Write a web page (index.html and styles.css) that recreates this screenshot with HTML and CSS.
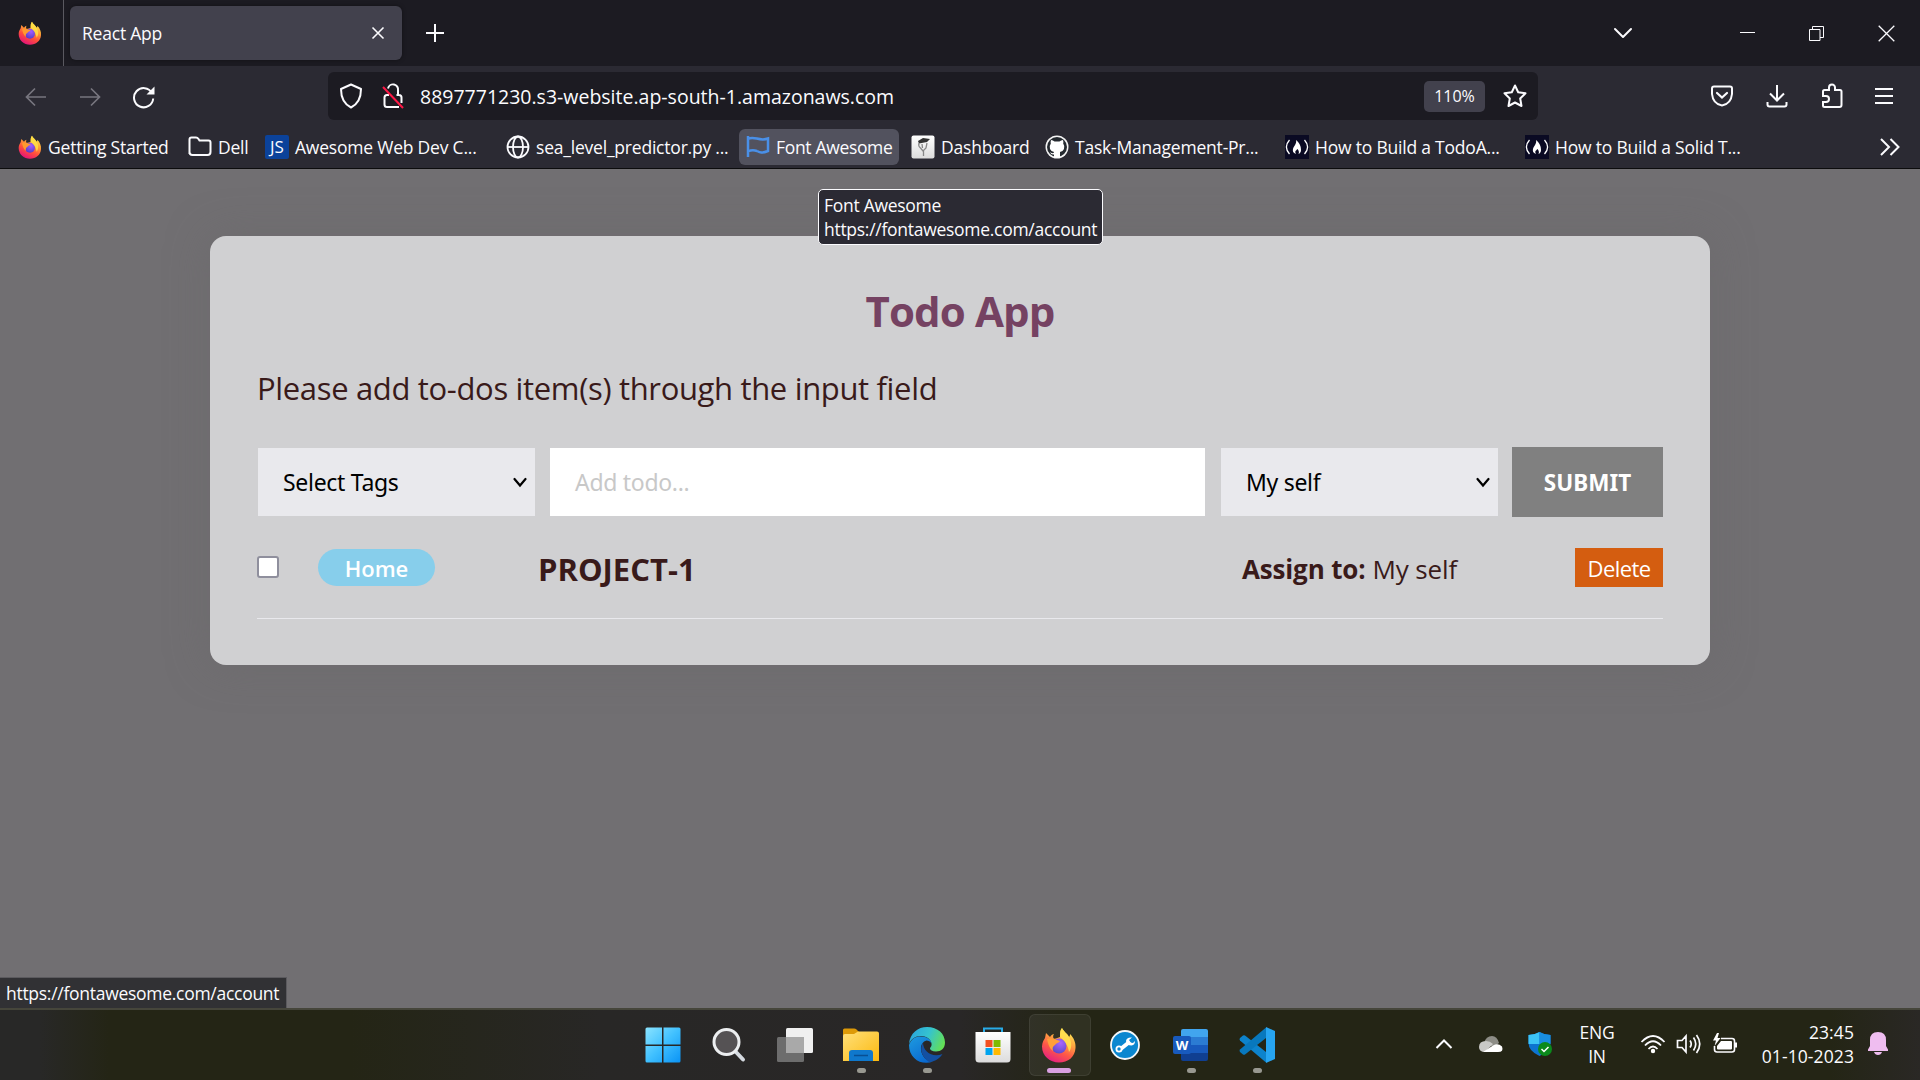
FILE: index.html
```html
<!DOCTYPE html>
<html lang="en">
<head>
<meta charset="utf-8">
<title>React App</title>
<link rel="stylesheet" href="styles.css">
</head>
<body>
<svg class="defs" width="0" height="0">
  <defs>
    <linearGradient id="fxBody" x1="0.8" y1="0" x2="0.3" y2="1"><stop offset="0" stop-color="#fff44f"/><stop offset=".35" stop-color="#ffa436"/><stop offset=".65" stop-color="#ff4f3b"/><stop offset="1" stop-color="#e2107c"/></linearGradient>
    <radialGradient id="fxGlobe" cx=".6" cy=".3" r=".8"><stop offset="0" stop-color="#a45cff"/><stop offset="1" stop-color="#4b3bc0"/></radialGradient>
    <linearGradient id="win" x1="0" y1="0" x2="1" y2="1"><stop offset="0" stop-color="#8be4ff"/><stop offset=".5" stop-color="#40c0ff"/><stop offset="1" stop-color="#0a93f5"/></linearGradient>
    <linearGradient id="folder" x1="0" y1="0" x2="1" y2="1"><stop offset="0" stop-color="#ffe07a"/><stop offset="1" stop-color="#fcb90f"/></linearGradient>
    <linearGradient id="edgeTop" x1="0" y1=".3" x2="1" y2=".6"><stop offset="0" stop-color="#2aa5dd"/><stop offset=".5" stop-color="#35c3cf"/><stop offset="1" stop-color="#65e053"/></linearGradient>
    <linearGradient id="edgeLow" x1="0" y1="0" x2=".6" y2="1"><stop offset="0" stop-color="#1e9be0"/><stop offset="1" stop-color="#0a6ad0"/></linearGradient>
    <linearGradient id="paper" x1="0" y1="0" x2="0" y2="1"><stop offset="0" stop-color="#ffffff"/><stop offset="1" stop-color="#dcdcdc"/></linearGradient>
    <symbol id="firefox" viewBox="0 0 36 36">
      <path d="M21 1c1 3 5 5 7 9 1-1 1-2 1-3 4 4 6 9 5.500 14C34 30 27 35.500 18 35.500S1 29 1 19.500c0-4 2-7 3-8.500L5 6l4 4c1-2 3-3 4-3-1 1-1 3-.5 4.500C14 12 17 11 19 10c0-4 0-7 2-9z" fill="url(#fxBody)"/>
      <circle cx="18" cy="19" r="7.500" fill="url(#fxGlobe)"/>
      <path d="M6 12c5-2 9 1 13 2-1 2-4 2-5 4-2 1-3 3-2 6-4-3-5-8-6-12z" fill="#ff9a2e"/>
      <path d="M21 1c1 3 5 5 7 9 3 5 3 11 0 15-1-6-3-10-9-15 0-4 0-7 2-9z" fill="#ffe045" opacity=".85"/>
    </symbol>
    <symbol id="fcc" viewBox="0 0 24 24">
      <rect width="24" height="24" fill="#0a0a23"/>
      <path d="M4.500 5C.5 9.500.5 14.500 4.500 19M19.500 5C23.500 9.500 23.500 14.500 19.500 19" fill="none" stroke="#fff" stroke-width="1.300"/>
      <path d="M11 5c4 3 5 7 5 10 0 2-1 3.500-2.500 4 1-2 0-4-1-5-1 1-1 1-2 2-.5 1 0 2 .5 3C8 18 7.500 16 8 14c.5-3 4-5 3-9z" fill="#fff"/>
    </symbol>
  </defs>
</svg>

<div class="screen">
  <header class="tabstrip">
    <div class="fx-home"><svg width="24" height="24"><use href="#firefox"/></svg></div>
    <div class="tab"><span class="ui-text">React App</span>
      <svg width="14" height="14" viewBox="0 0 14 14" class="line"><path d="M1.500 1.500l11 11M12.500 1.500l-11 11"/></svg></div>
    <svg class="line new-tab" width="20" height="20" viewBox="0 0 20 20"><path d="M10 1v18M1 10h18" stroke-width="2"/></svg>
    <div class="win-controls">
      <svg class="line" width="20" height="12" viewBox="0 0 20 12"><path d="M2 2l8 8 8-8" stroke-width="2" stroke-linecap="round" stroke-linejoin="round"/></svg>
      <svg class="line" width="15" height="14" viewBox="0 0 15 14"><path d="M0 6.500h15" stroke-width="1"/></svg>
      <svg class="line" width="15" height="15" viewBox="0 0 15 15"><path d="M.5 3.500h10.500v11H.5zM3.500 3.500V.5h11V11.500h-3.500" stroke-width="1"/></svg>
      <svg class="line" width="17" height="17" viewBox="0 0 17 17"><path d="M.7.7l15.600 15.600M16.300.7L.7 16.300" stroke-width="1.300"/></svg>
    </div>
  </header>

  <nav class="navbar">
    <div class="nav-buttons">
      <svg class="line dim" width="22" height="20" viewBox="0 0 22 20"><path d="M21 10H1.500M10 1.500L1.500 10l8.500 8.500" stroke-width="1.700"/></svg>
      <svg class="line dim" width="22" height="20" viewBox="0 0 22 20"><path d="M1 10h19.500M12 1.500l8.500 8.500-8.500 8.500" stroke-width="1.700"/></svg>
      <svg class="line" width="24" height="24" viewBox="0 0 24 24"><path d="M20 8A9.600 9.600 0 1 0 21.200 13.500" stroke-width="2"/><path d="M22.500 1.500v8h-8z" fill="#fbfbfe" stroke="none"/></svg>
    </div>
    <div class="urlbar">
      <svg class="line" width="24" height="26" viewBox="0 0 24 26"><path d="M12 1.500L22 6c0 9-3 15-10 18.500C5 21 2 15 2 6z" stroke-width="2" stroke-linejoin="round"/></svg>
      <svg class="line lock" width="22" height="26" viewBox="0 0 22 26"><path d="M6 5.500a5 5 0 0 1 10 2V12M14.500 12H17q2.500 0 2.500 2.500V20M17 24H5q-2.500 0-2.500-2.500v-7Q2.500 12 5 12h2" stroke-width="2"/><path d="M1 4l20 21" stroke="#ff1846" stroke-width="2"/></svg>
      <span class="url">8897771230.s3-website.ap-south-1.amazonaws.com</span>
      <div class="zoom-level">110%</div>
      <svg class="line" width="26" height="26" viewBox="0 0 26 26"><path d="M13 2.500l3.200 6.800 7.300 1-5.300 5.200 1.300 7.500L13 19.500 6.500 23l1.300-7.500L2.500 10.300l7.300-1z" stroke-width="2" stroke-linejoin="round"/></svg>
    </div>
    <div class="nav-tools">
      <svg class="line" width="24" height="22" viewBox="0 0 24 22"><path d="M4 1.500h16q2 0 2 2V9q-1 10-10 11.500Q3 19 2 9V3.500q0-2 2-2z" stroke-width="2"/><path d="M7 8l5 4.500L17 8" stroke-width="2.200" stroke-linecap="round"/></svg>
      <svg class="line" width="22" height="24" viewBox="0 0 22 24"><path d="M11 1v15M4 9.500l7 7 7-7M1.500 18v2.500q0 2 2 2h15q2 0 2-2V18" stroke-width="2"/></svg>
      <svg class="line" width="22" height="26" viewBox="0 0 22 26"><path d="M2 13V8.500q0-1.500 1.500-1.500H8V4.500a3 3 0 0 1 6 0V7h5q1.500 0 1.500 1.500V22q0 2-2 2H3.500Q2 24 2 22.500V19h3a3 3 0 0 0 0-6z" stroke-width="2"/></svg>
      <svg class="line" width="18" height="18" viewBox="0 0 18 18"><path d="M0 2h18M0 9h18M0 16h18" stroke-width="2"/></svg>
    </div>
  </nav>

  <div class="bookmarks">
    <div class="bm"><svg width="24" height="24"><use href="#firefox"/></svg><span class="ui-text">Getting Started</span></div>
    <div class="bm"><svg class="line" width="24" height="24" viewBox="0 0 24 24"><path d="M1.500 19V4.500q0-2 2-2H8q1.500 0 2.500 1.500l1 1.500h9q2 0 2 2V17q0 3-3 3h-15q-3 0-3-3z" stroke-width="2"/></svg><span class="ui-text">Dell</span></div>
    <div class="bm"><span class="js-icon">JS</span><span class="ui-text">Awesome Web Dev C...</span></div>
    <div class="bm"><svg class="line" width="24" height="24" viewBox="0 0 24 24"><circle cx="12" cy="12" r="10.500" stroke-width="1.800"/><ellipse cx="12" cy="12" rx="5" ry="10.500" stroke-width="1.800"/><path d="M1.500 12h21" stroke-width="1.800"/></svg><span class="ui-text">sea_level_predictor.py ...</span></div>
    <div class="bm hover"><svg width="24" height="24" viewBox="0 0 24 24"><path d="M2 1v21M2 4c6-4 11 3 20-.5v12.500c-6 2.500-8 1.500-11 0M2 16.500c4-2 6-1.500 9-.5" fill="none" stroke="#4a90e8" stroke-width="2.500"/></svg><span class="ui-text">Font Awesome</span></div>
    <div class="bm"><svg width="24" height="24" viewBox="0 0 24 24"><rect x=".5" y=".5" width="23" height="23" rx="2" fill="url(#paper)"/><path d="M7 6l5-3 7 1-3 3-8 1.500z" fill="#333"/><path d="M8 8q-1 3 1.500 5l2.500 3 3-3 1-5M12.500 15v6M11 9l.5 4" stroke="#888" stroke-width="1.300" fill="none"/></svg><span class="ui-text">Dashboard</span></div>
    <div class="bm"><svg width="24" height="24" viewBox="0 0 24 24"><circle cx="12" cy="12" r="11.500" fill="#f4f4f4"/><circle cx="12" cy="12" r="10" fill="#24292f"/><path d="M6 5q2 0 3.500 1.500h5Q16 5 18 5q.7 2 .2 3.500Q20 11 19 14q-1 2.500-4 3v5.500H9v-3q-3 .5-4-2.500 2 2 4 .5v-.5q-3-.5-4-3-1-3 .8-5.500Q5.300 7 6 5z" fill="#fff"/></svg><span class="ui-text">Task-Management-Pr...</span></div>
    <div class="bm"><svg width="24" height="24"><use href="#fcc"/></svg><span class="ui-text">How to Build a TodoA...</span></div>
    <div class="bm"><svg width="24" height="24"><use href="#fcc"/></svg><span class="ui-text">How to Build a Solid T...</span></div>
    <svg class="line more" width="20" height="18" viewBox="0 0 20 18"><path d="M1 1l8 8-8 8M10.500 1l8 8-8 8" stroke-width="2"/></svg>
  </div>

  <main class="page">
    <section class="card">
      <h1>Todo App</h1>
      <p>Please add to-dos item(s) through the input field</p>
      <form class="todo-form">
        <div class="select"><span>Select Tags</span><svg width="14" height="11" viewBox="0 0 14 11"><path d="M1.500 2L7 8.500 12.500 2" fill="none" stroke="#000" stroke-width="2.200" stroke-linecap="round"/></svg></div>
        <div class="input">Add todo...</div>
        <div class="select"><span>My self</span><svg width="14" height="11" viewBox="0 0 14 11"><path d="M1.500 2L7 8.500 12.500 2" fill="none" stroke="#000" stroke-width="2.200" stroke-linecap="round"/></svg></div>
        <div class="submit">SUBMIT</div>
      </form>
      <div class="todo">
        <span class="checkbox"></span>
        <span class="pill">Home</span>
        <span class="name">PROJECT-1</span>
        <span class="assign"><b>Assign to:</b><span>My self</span></span>
        <span class="delete">Delete</span>
      </div>
    </section>
    <div class="tooltip"><span class="ui-text">Font Awesome</span><span class="ui-text">https://fontawesome.com/account</span></div>
    <div class="status"><span class="ui-text">https://fontawesome.com/account</span></div>
  </main>

  <footer class="taskbar">
    <div class="apps">
      <div class="app"><svg width="36" height="36" viewBox="0 0 36 36"><path d="M2 .5h15v17H.5V2Q.5.5 2 .5zM18.500.5H34q1.500 0 1.500 1.500v15.500h-17zM.5 19H17v16.500H2Q.5 35.500.5 34zM18.500 19h17v15q0 1.500-1.500 1.500H18.500z" fill="url(#win)"/></svg></div>
      <div class="app"><svg width="36" height="36" viewBox="0 0 36 36"><path d="M24 24l8 8.500" stroke="#d5dae0" stroke-width="4" stroke-linecap="round"/><circle cx="15.500" cy="15" r="12.500" fill="#555254" stroke="#eceef0" stroke-width="3"/></svg></div>
      <div class="app"><svg width="36" height="36" viewBox="0 0 36 36"><rect x="9" y="1" width="27" height="25" rx="1.500" fill="#f0f0f0"/><rect x="0" y="10" width="27" height="25" rx="1.500" fill="#6d6d6d"/><path d="M9 10h18v16H9z" fill="#a9a9a9"/></svg></div>
      <div class="app run"><svg width="36" height="36" viewBox="0 0 36 36"><path d="M0 10V3q0-1.500 1.500-1.500H11q1.500 0 2.500 1L16 5v5z" fill="#dd9a08"/><path d="M0 9q0-2 2-2h9l4-2.500h19q2 0 2 2V34H0z" fill="url(#folder)"/><path d="M6 34V26q0-3 3-3h18q3 0 3 3v8z" fill="#0f78cc"/><path d="M11 28.500h14" stroke="#084f93" stroke-width="1.500"/></svg></div>
      <div class="app run"><svg width="36" height="36" viewBox="0 0 36 36"><path d="M0 17C1 6 9 0 18 0c11 0 18 7 18 15.500 0 6-4 9-9 9-4 0-6-1.500-6-3 0-1 2-2 1.500-5C22 12 17 9 12 9 6 9 2 12 0 17z" fill="url(#edgeTop)"/><path d="M0 18C2 12 6 9.500 12 9.500c6 0 10 3 10.500 7-1-2-3-3-5-3-4 1-6 5-5.500 9 .5 7 6 12 12 12C13 39 0 32 0 18z" fill="url(#edgeLow)"/><path d="M14 16c-4 6-1 14 6 19 6 0 11-4 13.500-8-10 4-19-2-19.500-11z" fill="#1350a2"/></svg></div>
      <div class="app"><svg width="36" height="36" viewBox="0 0 36 36"><path d="M9 6V1.500h18V6" fill="none" stroke="#28abe8" stroke-width="2"/><path d="M.5 5h35v27q0 3.500-3.500 3.500H4Q.5 35.500.5 32z" fill="url(#paper)"/><path d="M10.500 13h7v7h-7z" fill="#f25022"/><path d="M18.500 13h7v7h-7z" fill="#7fba00"/><path d="M10.500 21h7v7h-7z" fill="#00a4ef"/><path d="M18.500 21h7v7h-7z" fill="#ffb900"/></svg></div>
      <div class="app active"><svg width="36" height="36"><use href="#firefox"/></svg></div>
      <div class="app"><svg width="36" height="36" viewBox="0 0 36 36"><circle cx="18" cy="18" r="14" fill="#0a87d0" stroke="#f5f8fa" stroke-width="1.800"/><path d="M13 22.500l10-8" stroke="#fff" stroke-width="4"/><circle cx="12" cy="22" r="2.600" fill="#0a87d0" stroke="#fff" stroke-width="1.800"/><path d="M25 10.500l-3 2.500 1 2.500 3 .5 2-2q0 4-3.500 4.500-5 0-5.500-4.500.5-4 6-3.500z" fill="#fff"/></svg></div>
      <div class="app run"><svg width="36" height="36" viewBox="0 0 36 36"><path d="M8 10V4q0-2 2-2h23q2 0 2 2v6z" fill="#41a5ee"/><path d="M8 10h27v8H8z" fill="#2b7cd3"/><path d="M8 18h27v8H8z" fill="#185abd"/><path d="M8 26h27v6q0 2-2 2H10q-2 0-2-2z" fill="#103f91"/><rect y="9" width="18" height="18" rx="2" fill="#185abd"/><text x="9" y="23" text-anchor="middle" class="word-w">W</text></svg></div>
      <div class="app run"><svg width="36" height="36" viewBox="0 0 36 36"><path d="M1 11l3-2.500q1-.5 2 0L27 25v10.500L1 13.500q-1-1.200 0-2.500z" fill="#0d83cc"/><path d="M1 25l3 2.500q1 .5 2 0L27 11V.5L1 22.500q-1 1.200 0 2.500z" fill="#0878bd"/><path d="M27 0l9 4v28l-9 4z" fill="#27a5f1"/></svg></div>
    </div>
    <div class="tray">
      <svg class="line chev" width="18" height="12" viewBox="0 0 18 12"><path d="M1.500 10L9 2.500l7.500 7.500" stroke-width="2"/></svg>
      <svg class="cloud" width="26" height="20" viewBox="0 0 26 20"><path d="M6 9q2-7 8-7 5 0 7 7l-5 4z" fill="#8d8d86"/><path d="M7 18q-6 0-6-5 0-6 7-6 4 0 7 3l-7 7z" fill="#c9c9c6"/><path d="M5 18l10-6.500q5-3 9 1 2 5.500-4 5.500z" fill="#fff"/></svg>
      <svg class="defender" width="26" height="26" viewBox="0 0 26 26"><path d="M12.500 1q5 3 11 3v8q0 8-11 13Q1.500 20 1.500 12V4q6 0 11-3z" fill="#0d74d0"/><path d="M12.500 1v12h-11V4q6 0 11-3z" fill="#3cc4f5"/><path d="M12.500 1q5 3 11 3v9h-11z" fill="#198ee0"/><circle cx="18" cy="18" r="7" fill="#0b8a1c"/><path d="M14.500 18l2.500 2.500 4.500-4.500" fill="none" stroke="#fff" stroke-width="1.500"/></svg>
      <div class="lang"><span class="ui-text">ENG</span><span class="ui-text">IN</span></div>
      <svg class="line" width="26" height="20" viewBox="0 0 26 20"><path d="M1.500 8q11.500-12 23 0M5 11.500q8-8.500 16 0M8.500 15q4.500-5 9 0" stroke-width="1.800"/><circle cx="13" cy="17" r="2.200" fill="#fff" stroke="none"/></svg>
      <svg class="line" width="26" height="22" viewBox="0 0 26 22"><path d="M1.500 7.500H6l4-4.500v16l-4-4.500H1.500zM14 7.500q2.500 3.500 0 7M17.500 4.500q4.500 6.500 0 13M20.500 2q6.500 9 0 18" stroke-width="1.700"/></svg>
      <svg class="line battery" width="26" height="22" viewBox="0 0 26 22"><path d="M9 5.500h11q2.500 0 2.500 2.500v8.500q0 2.500-2.500 2.500H5q-2.500 0-2.500-2.500V13" stroke-width="1.600"/><path d="M9 8h10q1 0 1 1v6.500q0 1-1 1H6q-1 0-1-1V13zM23 9.500h2v5h-2z" fill="#fff" stroke="none"/><path d="M5 0L1 7.500h3L2.500 13 8.500 5H5.500L7 0z" fill="#fff" stroke="none"/></svg>
      <div class="clock"><span class="ui-text">23:45</span><span class="ui-text">01-10-2023</span></div>
      <svg width="22" height="26" viewBox="0 0 22 26"><path d="M3 15V9q0-8 8-8t8 8v6l2 3.500V20H1v-1.500zM7 21h8q-1 3-4 3t-4-3z" fill="#efbdf0"/></svg>
    </div>
  </footer>
</div>
</body>
</html>
```
FILE: styles.css
```css
* { box-sizing: border-box; }
body { margin: 0; font-family: "Open Sans", "Noto Sans", sans-serif; color: #fbfbfe; }
svg { display: block; flex: none; }
.defs { position: absolute; }
.line { fill: none; stroke: #fbfbfe; stroke-width: 1.6; }
.dim { stroke: #77767f; }
.ui-text { font-size: 17.5px; line-height: 24px; letter-spacing: -0.21px; white-space: nowrap; }
.screen { width: 1920px; height: 1080px; display: flex; flex-direction: column; overflow: hidden; }

.tabstrip { height: 66px; background: #1c1b22; display: flex; align-items: center; flex: none; }
.fx-home { width: 64px; height: 66px; border-right: 1px solid #5a5960; display: flex; align-items: center; justify-content: center; padding-right: 3px; }
.tab { width: 332px; height: 54px; margin-left: 6px; padding: 0 17px 0 12px; border-radius: 6px; background: #42414d; display: flex; align-items: center; justify-content: space-between; box-shadow: 0 0 4px rgba(0,0,0,.4); }
.new-tab { margin-left: 23px; }
.win-controls { margin-left: auto; display: grid; grid-template-columns: 20px 15px 15px 17px; column-gap: 54px; align-items: center; padding-right: 25px; }
.win-controls svg:first-child { margin-left: -53px; }

.navbar { height: 60px; padding-top: 6px; background: #2b2a33; display: flex; flex: none; }
.nav-buttons { width: 328px; height: 50px; display: flex; align-items: center; padding-left: 25px; gap: 32px; }
.nav-buttons svg:last-child { margin-left: -1px; }
.urlbar { width: 1210px; height: 48px; background: #1c1b22; border-radius: 6px; display: flex; align-items: center; padding: 0 10px 0 11px; }
.lock { margin: 0 16px 0 19px; }
.url { font-size: 19.5px; line-height: 26px; padding-top: 2px; white-space: nowrap; }
.zoom-level { width: 61px; height: 31px; margin-left: auto; margin-right: 17px; border-radius: 5px; background: #42414d; display: flex; align-items: center; justify-content: center; font-size: 16px; }
.nav-tools { flex: 1; height: 47px; padding: 0 27px 0 172px; display: flex; align-items: center; justify-content: space-between; }

.bookmarks { height: 43px; padding: 3px 0 4px 11px; background: #2b2a33; border-bottom: 1px solid #0c0c0d; display: grid; grid-template-columns: 170px 77px 241px 240px 165px 134px 240px 240px 340px 40px; flex: none; align-items: center; }
.bm { display: flex; align-items: center; gap: 6px; height: 36px; padding-left: 7px; white-space: nowrap; }
.bm.hover { width: 160px; background: #52525e; border-radius: 6px; }
.bm.hover .ui-text { letter-spacing: -0.33px; }
.js-icon { width: 24px; height: 24px; background: #0b429a; border-radius: 2px; font-size: 17px; line-height: 24px; text-align: center; }
.more { margin-left: 22px; }

.page { height: 839px; position: relative; background: #716f72; padding: 67px 210px 0; flex: none; }
.card { width: 1500px; height: 429px; border-radius: 16px; background: #d0d0d2; padding: 47px 47px 0; color: #391a1a; box-shadow: 0 0 40px rgba(105,103,106,.5); }
h1 { margin: 0; height: 56px; line-height: 56px; font-size: 42px; letter-spacing: -0.87px; text-align: center; color: #754262; }
p { margin: 21px 0 31px; height: 56px; line-height: 56px; font-size: 31px; letter-spacing: -0.34px; white-space: nowrap; }
.todo-form { display: grid; grid-template-columns: 277px 655px 277px 151px; column-gap: 15px; padding-left: 1px; height: 70px; align-items: center; font-family: "Noto Sans", sans-serif; white-space: nowrap; letter-spacing: -0.3px; }
.todo-form { grid-template-columns: 277px 656px 277px 151px; column-gap: 15px; }
.submit { margin-left: -1px; width: 151px; height: 70px; background: #808080; color: #fff; font-size: 22.5px; letter-spacing: 0; font-weight: 700; display: flex; align-items: center; justify-content: center; }
.select { height: 68px; background: #e9e9ed; color: #000; display: flex; align-items: center; justify-content: space-between; padding: 0 8px 0 25px; font-size: 23px; }
.input { width: 655px; height: 68px; background: #fff; color: #c8c8c8; display: flex; align-items: center; padding-left: 25px; font-size: 23px; }
.todo { height: 102px; border-bottom: 1px solid #e9e9ed; display: grid; grid-template-columns: 61px 220px 704px 333px 88px; align-items: center; white-space: nowrap; }
.checkbox { width: 22px; height: 22px; margin-top: -1px; border: 2px solid #8f8f9d; border-radius: 3px; background: #fff; }
.pill { width: 117px; height: 37px; border-radius: 19px; background: #87ceeb; color: #fff; font-weight: 600; font-size: 22px; display: flex; justify-content: center; align-items: center; }
.name { font-size: 31px; font-weight: 700; padding-top: 2px; }
.assign { font-size: 26px; letter-spacing: -0.15px; display: flex; gap: 7px; padding-top: 2px; }
.delete { width: 88px; height: 39px; background: #d45d10; color: #fff; font-size: 22px; letter-spacing: -0.57px; display: flex; align-items: center; justify-content: center; }
.tooltip { position: absolute; left: 818px; top: 20px; width: 285px; height: 56px; border: 1px solid #fbfbfe; border-radius: 5px; background: #2b2a33; display: flex; flex-direction: column; align-items: flex-start; padding: 3px 5px; }
.status { position: absolute; left: 0; bottom: 0; width: 287px; height: 31px; background: #313134; border: 1px solid #5b5a5e; border-width: 1px 1px 0 0; padding: 3px 6px; white-space: nowrap; }
.tooltip .ui-text, .status .ui-text { letter-spacing: -0.28px; }

.taskbar { height: 72px; border-top: 2px solid #46463b; background: linear-gradient(90deg, #282827 0, #282827 40px, #242515 110px, #242515 350px, #282726 600px, #292727 960px, #242515 1060px, #242515 1830px, #2a2825 1920px); display: flex; justify-content: space-between; }
.apps { margin-left: 630px; display: grid; grid-template-columns: repeat(10, 66px); height: 70px; }
.app { position: relative; display: flex; align-items: center; justify-content: center; height: 69px; }
.run::after, .active::after { content: ""; position: absolute; width: 9px; height: 5px; bottom: 6px; border-radius: 3px; background: #989890; }
.active::after { width: 24px; background: #d9a0e2; }
.active::before { content: ""; position: absolute; left: 3px; top: 4px; width: 60px; height: 60px; border-radius: 6px; background: rgba(255,255,255,.06); border: 1px solid rgba(255,255,255,.07); }
.word-w { font: 700 13px "Open Sans", sans-serif; fill: #fff; }
.tray { height: 68px; display: grid; grid-template-columns: 43px 49px 53px 60px 36px 36px 49px 106px 22px; align-items: center; padding-right: 31px; }
.lang, .clock { display: flex; flex-direction: column; align-items: center; }
.lang { width: 34px; }
.clock { width: 93px; align-items: flex-end; }
.clock .ui-text { letter-spacing: 0.1px; }
```
